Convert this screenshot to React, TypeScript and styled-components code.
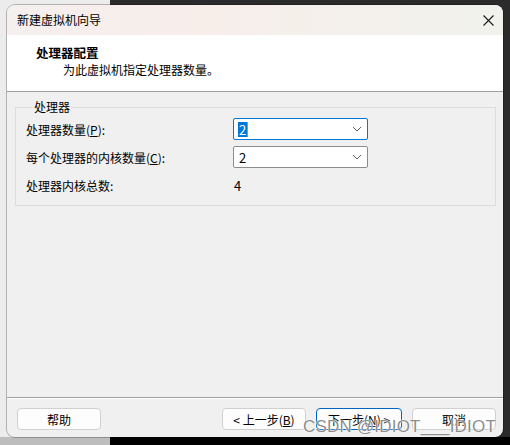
import React from "react";
import styled, { createGlobalStyle } from "styled-components";

const GlobalStyle = createGlobalStyle`
  html, body {
    margin: 0;
    padding: 0;
  }
  body {
    font-family: "Noto Sans CJK SC", "Noto Sans", sans-serif;
    font-size: 12px;
    color: #000;
  }
`;

// desktop behind the dialog
const Desktop = styled.div`
  position: relative;
  width: 510px;
  height: 445px;
  overflow: hidden;
  padding: 5px 0 0 7px;
  box-sizing: border-box;
  background:
    linear-gradient(to right, #bdbdbd 0 110px, #000 110px) bottom / 100% 8px no-repeat,
    linear-gradient(to right, #ececec 0 110px, #2b2b2b 110px);
`;

const Window = styled.div`
  width: 496px;
  height: 432px;
  border-radius: 8px;
  overflow: hidden;
  background: #f0f0f0;
  box-shadow: 0 0 0 1px rgba(0, 0, 0, 0.25);
  display: flex;
  flex-direction: column;
`;

const TitleBar = styled.div`
  height: 30px;
  flex: none;
  display: flex;
  align-items: center;
  justify-content: space-between;
  padding: 0 8px 0 10px;
  background: linear-gradient(to right, #f5efee, #f7eeea 40%, #f1f2ec);
`;

const TitleText = styled.span`
  font-size: 12px;
  line-height: 16px;
`;

const CloseButton = styled.div`
  width: 14px;
  height: 14px;
  display: flex;
  align-items: center;
  justify-content: center;
`;

const Header = styled.div`
  height: 57px;
  flex: none;
  box-sizing: border-box;
  background: #fff;
  border-bottom: 1px solid #a0a0a0;
  padding: 10px 0 0 29px;
  display: flex;
  flex-direction: column;
`;

const HeaderTitle = styled.div`
  font-weight: bold;
  font-size: 12.5px;
  line-height: 16px;
`;

const HeaderSub = styled.div`
  font-size: 12px;
  line-height: 17px;
  padding-left: 27px;
`;

const Body = styled.div`
  flex: 1;
  padding: 7px 7px 0 8px;
`;

const Group = styled.fieldset`
  margin: 0;
  padding: 3px 0 9px 10px;
  border: 1px solid #dcdcdc;
  display: flex;
  flex-direction: column;
  gap: 6px;
`;

const Legend = styled.legend`
  margin-left: 7px;
  padding: 0 1px;
  font-size: 12px;
  line-height: 16px;
`;

const Row = styled.div`
  height: 22px;
  display: grid;
  grid-template-columns: 207px 135px;
  align-items: center;
`;

const Label = styled.span`
  font-size: 12px;
`;

const Mnemonic = styled.span`
  text-decoration: underline;
`;

const Combo = styled.div<{ $focused?: boolean }>`
  height: 22px;
  box-sizing: border-box;
  background: #fff;
  border: 1px solid ${(p) => (p.$focused ? "#0078d7" : "#8c8c8c")};
  border-radius: 2px;
  display: flex;
  align-items: center;
  justify-content: space-between;
  padding: 0 5px 0 4px;
`;

const ComboValue = styled.span<{ $selected?: boolean }>`
  font-size: 13px;
  line-height: 15px;
  padding: 0 1px;
  color: ${(p) => (p.$selected ? "#fff" : "#000")};
  background: ${(p) => (p.$selected ? "#0078d7" : "transparent")};
  border-right: ${(p) => (p.$selected ? "1px solid #f08020" : "none")};
`;

const Value = styled.span`
  font-size: 13px;
  padding-left: 1px;
`;

const Footer = styled.div`
  flex: none;
  height: 40px;
  box-sizing: border-box;
  border-top: 1px solid #a0a0a0;
  box-shadow: inset 0 1px #fff;
  padding: 10px 7px 0 10px;
  display: flex;
  align-items: flex-start;
`;

const ButtonGroup = styled.div`
  margin-left: auto;
  display: flex;
  gap: 10px;
`;

const Button = styled.button<{ $primary?: boolean; $width?: number }>`
  width: ${(p) => p.$width ?? 84}px;
  height: 22px;
  box-sizing: border-box;
  padding: 0;
  font-family: inherit;
  font-size: 12px;
  color: #000;
  background: #fdfdfd;
  border: 1px solid ${(p) => (p.$primary ? "#0067c0" : "#d0d0d0")};
  border-radius: 4px;
`;

const Watermark = styled.div`
  position: absolute;
  right: 14px;
  bottom: 8px;
  font-family: "Liberation Sans", Arial, sans-serif;
  font-size: 17px;
  line-height: 20px;
  letter-spacing: 0.2px;
  color: rgba(120, 120, 120, 0.85);
  text-shadow: 0 0 2px #fff, 0 0 1px #fff;
  pointer-events: none;
`;

const Chevron = () => (
  <svg width="10" height="6" viewBox="0 0 10 6">
    <path d="M1 1 L5 5 L9 1" fill="none" stroke="#606060" strokeWidth="1" />
  </svg>
);

const CloseIcon = () => (
  <svg width="11" height="11" viewBox="0 0 11 11">
    <path d="M0.5 0.5 L10.5 10.5 M10.5 0.5 L0.5 10.5" stroke="#1a1a1a" strokeWidth="1.1" />
  </svg>
);

export default function App() {
  return (
    <>
      <GlobalStyle />
      <Desktop>
        <Window>
          <TitleBar>
            <TitleText>新建虚拟机向导</TitleText>
            <CloseButton>
              <CloseIcon />
            </CloseButton>
          </TitleBar>
          <Header>
            <HeaderTitle>处理器配置</HeaderTitle>
            <HeaderSub>为此虚拟机指定处理器数量。</HeaderSub>
          </Header>
          <Body>
            <Group>
              <Legend>处理器</Legend>
              <Row>
                <Label>
                  处理器数量(<Mnemonic>P</Mnemonic>):
                </Label>
                <Combo $focused>
                  <ComboValue $selected>2</ComboValue>
                  <Chevron />
                </Combo>
              </Row>
              <Row>
                <Label>
                  每个处理器的内核数量(<Mnemonic>C</Mnemonic>):
                </Label>
                <Combo>
                  <ComboValue>2</ComboValue>
                  <Chevron />
                </Combo>
              </Row>
              <Row>
                <Label>处理器内核总数:</Label>
                <Value>4</Value>
              </Row>
            </Group>
          </Body>
          <Footer>
            <Button>帮助</Button>
            <ButtonGroup>
              <Button>
                &lt; 上一步(<Mnemonic>B</Mnemonic>)
              </Button>
              <Button $primary $width={86}>
                下一步(<Mnemonic>N</Mnemonic>) &gt;
              </Button>
              <Button>取消</Button>
            </ButtonGroup>
          </Footer>
        </Window>
        <Watermark>CSDN @IDIOT___IDIOT</Watermark>
      </Desktop>
    </>
  );
}
